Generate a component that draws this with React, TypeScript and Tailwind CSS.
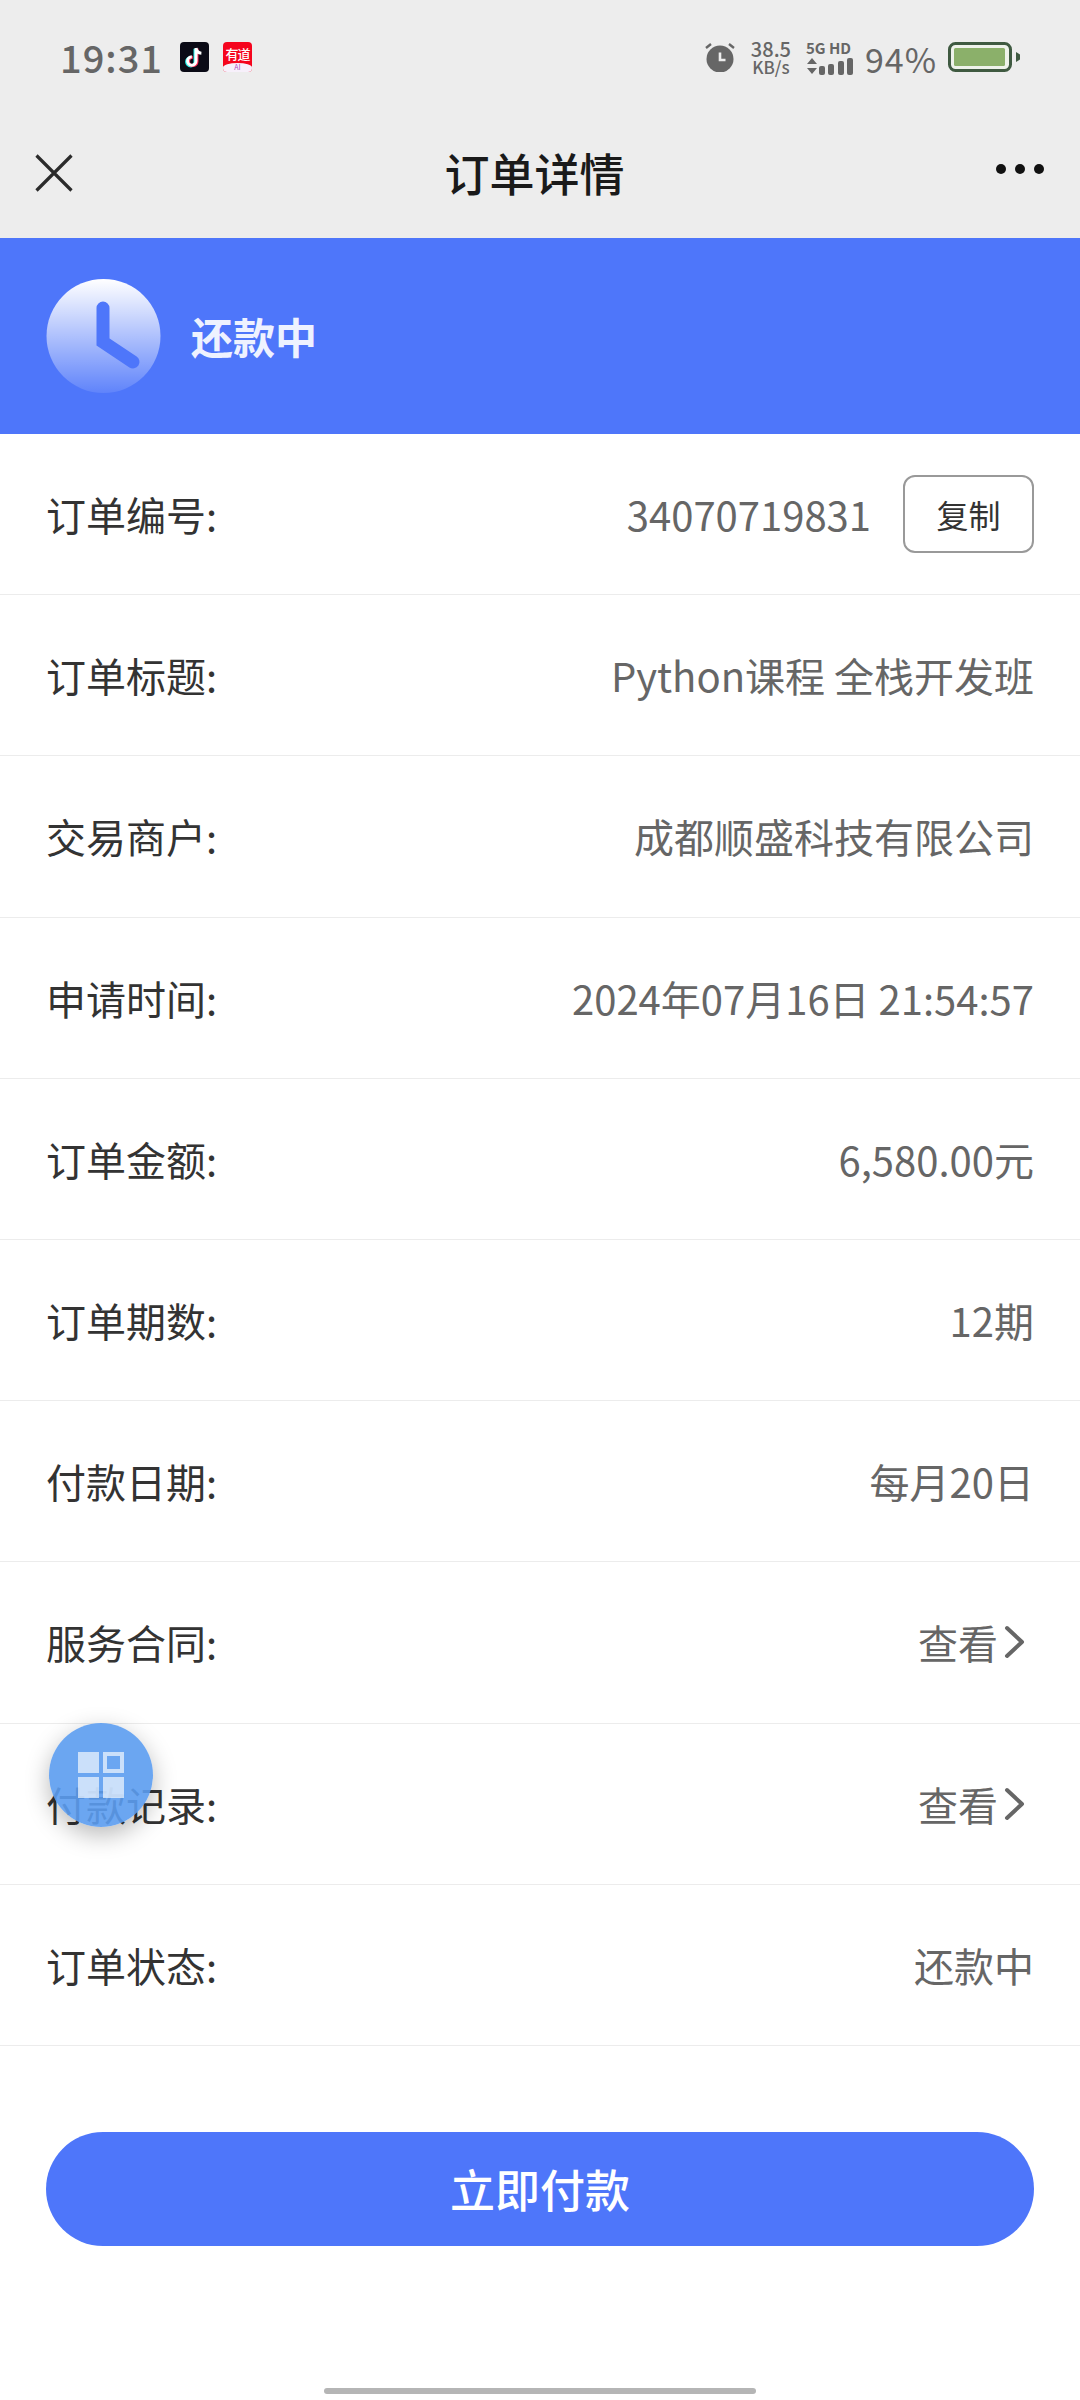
const font = { fontFamily: '"Noto Sans CJK SC", "Noto Sans", sans-serif' };

function Chevron() {
  return (
    <svg width="22" height="34" viewBox="0 0 22 34" className="ml-[6px] mr-[8px] shrink-0">
      <path d="M3 3 L18 17 L3 31" fill="none" stroke="#666666" strokeWidth="4" strokeLinecap="round" strokeLinejoin="round" />
    </svg>
  );
}

function Row({ label, children }: { label: string; children: React.ReactNode }) {
  return (
    <div className="flex h-[161.2px] items-center justify-between border-b border-[#ececec] px-[46px]">
      <span className="text-[40px] leading-none text-[#333333]">{label}:</span>
      <div className="flex items-center text-[40px] leading-none text-[#666666]">{children}</div>
    </div>
  );
}

function TikTok() {
  return (
    <svg width="29" height="30" viewBox="0 0 29 30" className="shrink-0">
      <rect width="29" height="30" rx="4" fill="#0b0b16" />
      <path d="M16 6v13a4.2 4.2 0 1 1-4.2-4.2" fill="none" stroke="#25f4ee" strokeWidth="3" transform="translate(-1 0.8)" />
      <path d="M16 6v13a4.2 4.2 0 1 1-4.2-4.2" fill="none" stroke="#fe2c55" strokeWidth="3" transform="translate(1 0.4)" />
      <path d="M16 6v13a4.2 4.2 0 1 1-4.2-4.2M16 6c.4 3 2.4 5 5.4 5.2" fill="none" stroke="#ffffff" strokeWidth="3" />
    </svg>
  );
}

function Youdao() {
  return (
    <div className="flex h-[30px] w-[29px] shrink-0 flex-col items-center overflow-hidden rounded-[4px] bg-[#f5051e]">
      <span className="mt-[4px] whitespace-nowrap text-[13px] font-medium leading-[15px] tracking-[-1px] text-white">有道</span>
      <span className="mt-auto flex h-[9px] w-full items-center justify-center rounded-t-[50%] bg-[#f7f0fb] text-[7px] leading-none text-[#b04ac0]">AI</span>
    </div>
  );
}

function Alarm() {
  return (
    <svg width="30" height="30" viewBox="0 0 30 30" className="shrink-0">
      <circle cx="15" cy="17" r="13.5" fill="#666666" />
      <path d="M1 6l5-4M29 6l-5-4" stroke="#666666" strokeWidth="2.4" />
      <path d="M15 10.5v7.5h5.5" fill="none" stroke="#ededed" strokeWidth="2.6" />
    </svg>
  );
}

function Signal() {
  return (
    <svg width="48" height="17" viewBox="0 0 48 17" className="block">
      <path d="M6 0l5 6H1zM6 16l5-6H1z" fill="#666666" />
      <rect x="13" y="8" width="6" height="9" rx="2" fill="#666666" />
      <rect x="22" y="6" width="6" height="11" rx="2" fill="#666666" />
      <rect x="32" y="3" width="6" height="14" rx="2" fill="#666666" />
      <rect x="41" y="0" width="6" height="17" rx="2" fill="#666666" />
    </svg>
  );
}

function Battery() {
  return (
    <svg width="72" height="30" viewBox="0 0 72 30" className="shrink-0">
      <rect x="1.5" y="1.5" width="61" height="27" rx="6" fill="#eef2ea" stroke="#3f5a41" strokeWidth="3" />
      <rect x="6" y="6" width="51" height="18" rx="1.5" fill="#8bb06a" />
      <path d="M68 10l4 2.5v5l-4 2.5z" fill="#3f5a41" />
    </svg>
  );
}

function StatusBar() {
  return (
    <div className="flex h-[114px] items-center justify-between pl-[60px] pr-[60px] text-[#666666]">
      <div className="flex items-center">
        <span className="mr-[17px] text-[38px] font-medium leading-none tracking-[1px]">19:31</span>
        <TikTok />
        <div className="w-[14px]" />
        <Youdao />
      </div>
      <div className="flex items-center">
        <Alarm />
        <div className="ml-[13px] flex w-[46px] flex-col items-center">
          <span className="text-[20px] font-medium leading-[20px]">38.5</span>
          <span className="text-[17px] font-medium leading-[16px]">KB/s</span>
        </div>
        <div className="ml-[12px] flex w-[48px] flex-col">
          <span className="whitespace-nowrap text-[15px] font-bold leading-[16px]">5G HD</span>
          <div className="mt-[2px]"><Signal /></div>
        </div>
        <span className="ml-[11px] mt-[4px] text-[34px] leading-none tracking-[1px]">94%</span>
        <div className="ml-[11px]"><Battery /></div>
      </div>
    </div>
  );
}

function NavBar() {
  return (
    <div className="flex h-[124px] items-start justify-between pl-[35px] pr-[36px] pt-[38px]">
      <svg width="38" height="38" viewBox="0 0 38 38" className="mt-[2px]">
        <path d="M1.5 1.5 L36.5 36.5 M36.5 1.5 L1.5 36.5" stroke="#2b2b2b" strokeWidth="3.2" />
      </svg>
      <span className="text-[45px] font-medium leading-[42px] text-[#1a1a1a]">订单详情</span>
      <div className="mt-[12px] flex w-[48px] justify-between">
        <span className="h-[10px] w-[10px] rounded-full bg-[#111111]" />
        <span className="h-[10px] w-[10px] rounded-full bg-[#111111]" />
        <span className="h-[10px] w-[10px] rounded-full bg-[#111111]" />
      </div>
    </div>
  );
}

function Banner() {
  return (
    <div className="flex h-[196px] items-center bg-[#4e76fa] pl-[46px]">
      <svg width="115" height="114" viewBox="0 0 115 114" className="shrink-0">
        <defs>
          <linearGradient id="clockFill" x1="0" y1="0" x2="0" y2="1">
            <stop offset="0" stopColor="#ffffff" />
            <stop offset="1" stopColor="#ffffff" stopOpacity="0.1" />
          </linearGradient>
        </defs>
        <circle cx="57.5" cy="57" r="57" fill="url(#clockFill)" />
        <path d="M57 29 V63 L87 83" fill="none" stroke="#4e76fa" strokeWidth="13" strokeLinecap="round" strokeLinejoin="miter" />
      </svg>
      <span className="ml-[30px] text-[42px] font-bold leading-none text-[#eef2ff]">还款中</span>
    </div>
  );
}

export default function App() {
  return (
    <div className="relative h-[2400px] w-[1080px] overflow-hidden bg-white" style={font}>
      <div className="bg-[#ededed]">
        <StatusBar />
        <NavBar />
      </div>
      <Banner />
      <Row label="订单编号">
        <span>34070719831</span>
        <button className="ml-[32px] h-[78px] w-[131px] rounded-[12px] border-2 border-[#999999] text-[32px] leading-none text-[#333333]">复制</button>
      </Row>
      <Row label="订单标题"><span>Python课程 全栈开发班</span></Row>
      <Row label="交易商户"><span>成都顺盛科技有限公司</span></Row>
      <Row label="申请时间"><span>2024年07月16日 21:54:57</span></Row>
      <Row label="订单金额"><span>6,580.00元</span></Row>
      <Row label="订单期数"><span>12期</span></Row>
      <Row label="付款日期"><span>每月20日</span></Row>
      <Row label="服务合同"><span>查看</span><Chevron /></Row>
      <Row label="付款记录"><span>查看</span><Chevron /></Row>
      <Row label="订单状态"><span>还款中</span></Row>
      <div className="px-[46px] pt-[86px]">
        <button className="h-[114px] w-full rounded-[57px] bg-[#4e76fa] text-[45px] font-medium leading-none text-white">立即付款</button>
      </div>
      <div className="absolute bottom-[6px] left-[324px] h-[6px] w-[432px] rounded-full bg-[#b5b5b5]" />
      <div className="absolute left-[49px] top-[1723px] flex h-[104px] w-[104px] items-center justify-center rounded-full bg-[#5b9cf0]/90 shadow-[0_8px_24px_rgba(0,0,0,0.28)]">
        <svg width="46" height="46" viewBox="0 0 46 46">
          <rect x="0" y="0" width="21" height="21" fill="#ffffff" fillOpacity="0.65" />
          <rect x="27" y="2" width="17" height="17" fill="none" stroke="#ffffff" strokeOpacity="0.65" strokeWidth="4" />
          <rect x="0" y="25" width="21" height="21" fill="#ffffff" fillOpacity="0.65" />
          <rect x="25" y="25" width="21" height="21" fill="#ffffff" fillOpacity="0.65" />
        </svg>
      </div>
    </div>
  );
}
